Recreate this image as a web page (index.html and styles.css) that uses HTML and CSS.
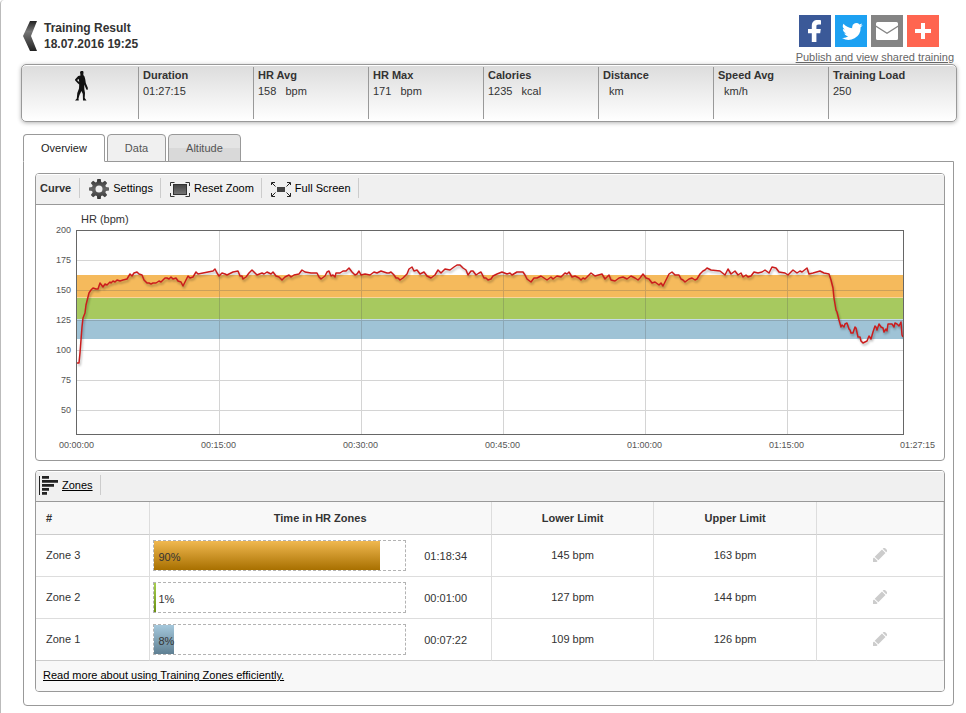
FILE: index.html
```
<!DOCTYPE html>
<html lang="en">

<head>
  <meta charset="UTF-8">
  <meta name="viewport" content="width=device-width, initial-scale=1.0">
  <title>Training Result</title>
  <link rel="stylesheet" href="styles.css">
</head>

<body>
  <!-- Gradients and icons shared by the whole page -->
  <svg class="defs" width="0" height="0" aria-hidden="true">
    <defs>
      <linearGradient id="dark" x1="0" y1="0" x2="0" y2="1">
        <stop offset="0" stop-color="#333" />
        <stop offset=".5" stop-color="#666" />
        <stop offset="1" stop-color="#333" />
      </linearGradient>
      <linearGradient id="screen" x1="0" y1="0" x2="0" y2="1">
        <stop offset="0" stop-color="#444" />
        <stop offset="1" stop-color="#777" />
      </linearGradient>
      <linearGradient id="arrow" x1="0" y1="0" x2="0" y2="1">
        <stop offset="0" stop-color="#222" />
        <stop offset=".35" stop-color="#777" />
        <stop offset="1" stop-color="#222" />
      </linearGradient>
      <symbol id="pencil" viewBox="0 0 14 14">
        <path fill="#ccc" d="M0 14V10.400L1 9.400L4.600 13L3.600 14ZM1.700 8.700L9 1.500L12.500 5L5.300 12.300ZM9.700 .8L10.500 0H12L14 2V3.500L13.200 4.300Z" />
      </symbol>
    </defs>
  </svg>

  <div class="page">
    <header class="header">
      <a class="back" href="#" aria-label="Back">
        <svg width="15" height="31" viewBox="0 0 15 31">
          <path fill="url(#arrow)" d="M7 0H14L8 15L14 30H7L0 15Z" />
        </svg>
      </a>
      <h1 class="title">Training Result<br>18.07.2016 19:25</h1>

      <div class="share">
        <div class="share-icons">
          <a class="share-icon facebook" href="#" aria-label="Facebook">
            <svg width="32" height="32" viewBox="0 0 32 32">
              <path fill="#fff" d="M22 5.200V9.500H19.600C17.700 9.500 17.400 10.400 17.400 11.700V14H21.800L21.200 18.200H17.400V27H12.800V18.200H9V14H12.800V10.800C12.800 7 15.100 5 18.500 5C20.100 5 21.500 5.100 22 5.200Z" />
            </svg>
          </a>
          <a class="share-icon twitter" href="#" aria-label="Twitter">
            <svg width="32" height="32" viewBox="-4 -3 37 37">
              <path fill="#fff" d="M28 8.600a9.900 9.900 0 0 1-2.800.8 4.500 4.500 0 0 0 2.200-2.700c-1 .5-2 1-3.100 1.200a4.900 4.900 0 0 0-8.500 3.300c0 .4 0 .8.1 1.100-4-.2-7.700-2.100-10.100-5.100a5 5 0 0 0 1.500 6.600c-.8 0-1.600-.3-2.200-.6v.1c0 2.400 1.700 4.400 3.900 4.800a4.900 4.900 0 0 1-2.200.1c.6 2 2.400 3.400 4.600 3.400a9.900 9.900 0 0 1-7.300 2A14 14 0 0 0 25.600 11.100c1-.7 1.800-1.600 2.400-2.500Z" />
            </svg>
          </a>
          <a class="share-icon email" href="#" aria-label="Email">
            <svg width="32" height="32" viewBox="0 0 32 32">
              <path fill="#fff" d="M6.500 7H25.500Q27 7 27 8.500V10.500L16 17.500L5 10.500V8.500Q5 7 6.500 7ZM5 12L16 19L27 12V23.500Q27 25 25.500 25H6.500Q5 25 5 23.500Z" />
            </svg>
          </a>
          <a class="share-icon more" href="#" aria-label="More">
            <svg width="32" height="32" viewBox="0 0 32 32">
              <path fill="#fff" d="M14 8H18V14H24V18H18V24H14V18H8V14H14Z" />
            </svg>
          </a>
        </div>
        <a class="share-link" href="#">Publish and view shared training</a>
      </div>
    </header>

    <!-- Summary of the training -->
    <dl class="stats">
      <div class="stat stat-figure">
        <svg width="14" height="30" viewBox="0 0 14 30">
          <path fill="#111" fill-rule="evenodd" d="M5 1L6 0H8L8.500 1L8.300 4L9.500 5.500L10.200 8L10.800 12L12.900 17L12.500 19L11.300 18.500L9.300 13.500V18L10 22L9.700 27L11.500 29.500H8L7.800 23L6.500 20L4.500 24L3.500 27.500L3.800 29.500H0L1.800 27.500L2.300 22L4 17.500L4.200 13.500L2.500 12L.2 9.500L0 8.500L3.200 5L5.500 4.500ZM3.800 8L2 9L4.200 11Z" />
        </svg>
      </div>
      <div class="stat">
        <dt>Duration</dt>
        <dd>01:27:15</dd>
      </div>
      <div class="stat">
        <dt>HR Avg</dt>
        <dd>158 <span class="unit">bpm</span></dd>
      </div>
      <div class="stat">
        <dt>HR Max</dt>
        <dd>171 <span class="unit">bpm</span></dd>
      </div>
      <div class="stat">
        <dt>Calories</dt>
        <dd>1235 <span class="unit">kcal</span></dd>
      </div>
      <div class="stat">
        <dt>Distance</dt>
        <dd><span class="unit">km</span></dd>
      </div>
      <div class="stat">
        <dt>Speed Avg</dt>
        <dd><span class="unit">km/h</span></dd>
      </div>
      <div class="stat">
        <dt>Training Load</dt>
        <dd>250</dd>
      </div>
    </dl>

    <div class="tabs" role="tablist">
      <button class="tab active" type="button" role="tab" aria-selected="true">Overview</button>
      <button class="tab" type="button" role="tab">Data</button>
      <button class="tab shaded" type="button" role="tab">Altitude</button>
    </div>

    <main class="panel">
      <!-- Heart rate curve -->
      <section class="box">
        <div class="toolbar">
          <h2 class="toolbar-title">Curve</h2>
          <button class="tool" type="button">
            <svg width="20" height="20" viewBox="0 0 20 20">
              <path fill="url(#dark)" fill-rule="evenodd" d="M8.300 0H11.700L12.200 3.100L13.400 3.600L16 1.800L18.200 4.100L16.400 6.600L16.900 7.900L20 8.400V11.600L16.900 12.100L16.400 13.400L18.200 15.900L15.900 18.200L13.400 16.400L12.100 16.900L11.700 20H8.300L7.900 16.900L6.600 16.400L4.100 18.200L1.800 15.900L3.600 13.400L3.100 12.100L0 11.600V8.400L3.100 7.900L3.600 6.600L1.800 4.100L4.100 1.800L6.600 3.600L7.800 3.100ZM10 6.500A3.500 3.500 0 1 0 10 13.500A3.500 3.500 0 1 0 10 6.500Z" />
            </svg>
            Settings
          </button>
          <button class="tool" type="button">
            <svg width="20" height="20" viewBox="0 0 20 20">
              <rect x="3.500" y="5.500" width="13" height="10" fill="url(#screen)" stroke="#333" />
              <path fill="none" stroke="#333" d="M4.500 3.500H.5V7M15.500 3.500H19.500V7M.5 14V17.500H4.500M19.500 14V17.500H15.500" />
            </svg>
            Reset Zoom
          </button>
          <button class="tool" type="button">
            <svg width="20" height="20" viewBox="0 0 20 20">
              <rect x="6" y="8" width="8" height="5" fill="#444" />
              <path fill="none" stroke="#222" d="M.5 6V3.500H4M1 4L4.500 7.500M16 3.500H19.500V6M19 4L15.500 7.500M.5 14V17.500H4M1 17L4.500 13.500M16 17.500H19.500V14M19 17L15.500 13.500" />
            </svg>
            Full Screen
          </button>
        </div>

        <div class="chart">
          <div class="chart-title">HR (bpm)</div>
          <div class="y-axis">
            <span>200</span>
            <span>175</span>
            <span>150</span>
            <span>125</span>
            <span>100</span>
            <span>75</span>
            <span>50</span>
          </div>
          <svg class="plot" viewBox="0 0 826 203" preserveAspectRatio="none" role="img" aria-label="Heart rate curve">
            <!-- Zone bands -->
            <g shape-rendering="crispEdges">
              <rect x="0" y="44" width="826" height="23" fill="#f5ba5c" />
              <rect x="0" y="67" width="826" height="21" fill="#a7c95f" />
              <rect x="0" y="88" width="826" height="20" fill="#9fc3d6" />
              <path class="zone-line" d="M0 66.500H826M0 88.500H826" />
            </g>
            <path class="grid" d="M0 29.500H826M0 59.500H826M0 89.500H826M0 119.500H826M0 149.500H826M0 179.500H826M142.500 0V203M284.500 0V203M426.500 0V203M568.500 0V203M710.500 0V203" />
            <polyline class="curve" points="0,132 2,132 3,122 4,109 5,96 6,87 8,82 9,74 11,66 12,62 14,59 16,57 19,58 21,58 23,52 26,56 28,53 30,54 33,51 34,52 36,50 38,51 40,49 43,50 46,49 50,48 53,43 55,45 57,42 60,41 62,43 65,44 67,49 70,52 72,52 74,53 76,52 79,52 82,50 84,51 86,49 88,47 90,47 92,48 94,46 96,48 99,47 101,50 104,51 106,55 108,51 111,45 113,47 116,46 119,41 121,43 126,42 131,41 136,40 138,38 140,42 142,45 145,42 148,43 150,44 152,43 156,41 161,40 163,45 165,45 166,48 169,46 172,42 175,39 178,42 180,44 185,42 187,43 190,41 194,43 196,41 199,45 202,46 205,49 208,46 212,44 214,46 217,44 222,43 225,39 228,41 234,42 240,42 242,46 244,48 248,45 250,41 252,40 254,45 256,44 258,46 259,42 263,42 266,40 269,40 272,37 275,41 278,44 280,43 282,40 284,44 288,43 293,44 297,41 300,42 304,40 310,42 312,42 314,41 317,44 319,47 321,47 323,49 326,47 330,43 332,38 335,36 337,40 340,39 343,43 347,41 350,45 354,47 358,44 361,39 364,42 368,38 373,39 377,36 380,34 383,34 386,37 389,39 391,44 394,40 396,40 399,44 402,42 404,41 407,47 409,47 411,49 414,48 416,45 420,43 425,41 430,43 433,42 435,44 440,41 446,41 448,44 450,48 454,51 457,47 460,47 464,45 467,47 470,49 474,46 476,48 480,45 484,46 488,42 490,43 492,41 495,46 498,45 502,47 504,49 506,47 508,48 511,45 514,42 518,45 525,43 528,48 532,44 534,49 538,50 542,47 546,46 550,48 554,45 558,47 561,49 563,47 566,43 569,47 572,48 575,52 578,51 582,54 584,52 586,55 589,49 592,43 595,41 598,44 602,44 604,48 606,49 608,51 612,48 615,47 618,49 620,48 623,43 626,40 628,39 630,37 634,39 643,40 648,44 651,38 654,43 658,40 661,44 664,42 666,46 669,44 671,46 674,45 677,41 681,42 685,41 688,39 692,42 695,36 699,37 702,41 708,42 711,44 716,39 720,42 723,40 725,41 730,37 732,43 736,42 743,40 747,42 752,43 754,49 756,57 757,67 759,79 760,81 762,89 764,96 765,94 767,96 768,93 770,92 772,98 773,99 774,102 776,102 778,96 779,97 781,106 783,106 784,110 786,112 788,111 790,110 792,105 794,108 796,101 798,95 799,96 800,99 802,93 804,96 806,97 807,101 809,98 810,100 811,93 813,93 815,93 817,96 818,92 820,93 822,95 824,91 825,104 826,106" />
          </svg>
          <div class="x-axis">
            <span>00:00:00</span>
            <span>00:15:00</span>
            <span>00:30:00</span>
            <span>00:45:00</span>
            <span>01:00:00</span>
            <span>01:15:00</span>
            <span>01:27:15</span>
          </div>
        </div>
      </section>

      <!-- Heart rate zones -->
      <section class="box">
        <div class="toolbar zones-toolbar">
          <a class="tool zones-link" href="#">
            <svg width="20" height="20" viewBox="0 0 20 20">
              <path fill="#222" d="M0 0H1V19H0ZM3 0H10V3H3ZM3 4H19V7H3ZM3 8H15V11H3ZM3 12H10V15H3ZM3 16H8V19H3Z" />
              <path fill="#555" d="M3 2H10V3H3ZM3 6H19V7H3ZM3 10H15V11H3ZM3 14H10V15H3ZM3 18H8V19H3Z" />
            </svg>
            <span>Zones</span>
          </a>
        </div>

        <table class="zones">
          <colgroup>
            <col class="col-name">
            <col class="col-time">
            <col class="col-limit">
            <col class="col-limit">
            <col class="col-edit">
          </colgroup>
          <thead>
            <tr>
              <th class="name">#</th>
              <th>Time in HR Zones</th>
              <th>Lower Limit</th>
              <th>Upper Limit</th>
              <th></th>
            </tr>
          </thead>
          <tbody>
            <tr>
              <td class="name">Zone 3</td>
              <td class="time">
                <div class="time-row">
                  <div class="bar">
                    <div class="fill orange" style="width: 90%"></div>
                    <span class="percent">90%</span>
                  </div>
                  <span class="duration">01:18:34</span>
                </div>
              </td>
              <td>145 bpm</td>
              <td>163 bpm</td>
              <td><button class="edit" type="button" aria-label="Edit Zone 3"><svg width="14" height="14"><use href="#pencil" /></svg></button></td>
            </tr>
            <tr>
              <td class="name">Zone 2</td>
              <td class="time">
                <div class="time-row">
                  <div class="bar">
                    <div class="fill green" style="width: 1%"></div>
                    <span class="percent">1%</span>
                  </div>
                  <span class="duration">00:01:00</span>
                </div>
              </td>
              <td>127 bpm</td>
              <td>144 bpm</td>
              <td><button class="edit" type="button" aria-label="Edit Zone 2"><svg width="14" height="14"><use href="#pencil" /></svg></button></td>
            </tr>
            <tr>
              <td class="name">Zone 1</td>
              <td class="time">
                <div class="time-row">
                  <div class="bar">
                    <div class="fill blue" style="width: 8%"></div>
                    <span class="percent">8%</span>
                  </div>
                  <span class="duration">00:07:22</span>
                </div>
              </td>
              <td>109 bpm</td>
              <td>126 bpm</td>
              <td><button class="edit" type="button" aria-label="Edit Zone 1"><svg width="14" height="14"><use href="#pencil" /></svg></button></td>
            </tr>
          </tbody>
        </table>

        <div class="box-footer">
          <a href="#">Read more about using Training Zones efficiently.</a>
        </div>
      </section>
    </main>
  </div>
</body>

</html>
```
FILE: styles.css
```
* {
  box-sizing: border-box;
}

body {
  margin: 0;
  background-color: #fff;
  color: #333;
  font-family: "Liberation Sans", Arial, sans-serif;
  font-size: 11px;
  line-height: 16px;
}

svg {
  display: block;
  flex: none;
}

button {
  font: inherit;
  color: inherit;
  cursor: pointer;
}

.defs {
  position: absolute;
}

.page {
  min-height: 100vh;
  padding-bottom: 7px;
  border-left: 1px solid #bbb;
  border-top-left-radius: 4px;
}

/* Header */

.header {
  display: flex;
  align-items: flex-start;
  padding: 15px 12px 0 22px;
}

.back {
  margin-top: 6px;
}

.title {
  margin: 5px auto 0 6px;
  font-size: 12px;
  line-height: 16px;
}

.share-icons {
  display: flex;
  gap: 4px;
  margin-left: 3px;
}

.share-icon {
  width: 32px;
  height: 32px;
}

.facebook {
  background-color: #3b5998;
}

.twitter {
  background-color: #1da1f2;
}

.email {
  background-color: #848484;
}

.more {
  background-color: #ff6550;
}

.share-link {
  display: block;
  margin-top: 4px;
  line-height: 13px;
  color: #666;
}

/* Summary bar */

.stats {
  display: grid;
  grid-template-columns: 116fr repeat(6, 115fr) 128fr;
  margin: 0 9px 0 20px;
  padding: 2px 0;
  border: 1px solid #999;
  border-radius: 5px;
  background: linear-gradient(#dcdcdc, #fff);
  box-shadow: inset 0 1px #fff, 0 1px 4px rgba(0, 0, 0, 0.3);
}

.stat {
  height: 52px;
  padding-left: 4px;
  border-left: 1px solid #999;
}

.stat-figure {
  display: flex;
  justify-content: center;
  padding: 4px 0 0 4px;
  border-left: none;
}

.stat dt {
  font-weight: bold;
}

.stat dd {
  margin: 0;
}

.unit {
  margin-left: 6px;
}

/* Tabs */

.tabs {
  display: flex;
  gap: 2px;
  position: relative;
  margin: 12px 12px -1px 22px;
}

.tab {
  height: 28px;
  padding: 0 17px;
  border: 1px solid #999;
  border-radius: 4px 4px 0 0;
  background-color: #f0f0f0;
  color: #555;
}

.tab.shaded {
  background: linear-gradient(#e4e4e4 50%, #d9d9d9 50%);
}

.tab.active {
  border-bottom-color: #fff;
  background-color: #fff;
  color: #222;
}

.panel {
  display: flex;
  flex-direction: column;
  gap: 9px;
  margin: 0 12px 0 22px;
  padding: 11px 8px 13px 11px;
  border: 1px solid #999;
  border-radius: 0 0 4px 4px;
}

.box {
  border: 1px solid #999;
  border-radius: 4px;
  overflow: hidden;
}

.toolbar {
  display: flex;
  align-items: center;
  height: 31px;
  padding: 0 0 2px 4px;
  border-bottom: 1px solid #999;
  background-color: #f0f0f0;
  box-shadow: inset 0 1px #fff;
}

.toolbar-title {
  margin: 0;
  padding-right: 8px;
  font-size: 11px;
  line-height: 20px;
  border-right: 1px solid #ccc;
}

.tool {
  display: flex;
  align-items: center;
  gap: 4px;
  height: 20px;
  padding: 0 7px 0 9px;
  border: none;
  border-right: 1px solid #ccc;
  background: none;
  color: #000;
}

.tool svg {
  margin-top: 2px;
}

/* Curve */

.chart {
  display: grid;
  grid-template-columns: 40px 1fr;
  padding: 6px 40px 8px 0;
}

.chart-title {
  grid-column: 2;
  height: 19px;
  padding-left: 5px;
}

.y-axis {
  display: flex;
  flex-direction: column;
  height: 205px;
  margin-top: -15px;
  padding-right: 5px;
  font-size: 9px;
  line-height: 30px;
  text-align: right;
  color: #555;
}

.plot {
  width: 100%;
  height: 205px;
  border: 1px solid #666;
}

.zone-line {
  fill: none;
  stroke: rgba(255, 255, 255, 0.4);
}

.grid {
  fill: none;
  stroke: rgba(84, 84, 84, 0.25);
  shape-rendering: crispEdges;
}

.curve {
  fill: none;
  stroke: #cb1c1c;
  stroke-width: 1.5;
  stroke-linejoin: round;
  filter: drop-shadow(1px 2px 1px rgba(0, 0, 0, 0.3));
}

.x-axis {
  grid-column: 1 / -1;
  display: grid;
  grid-template-columns: repeat(5, 142fr) 131fr 36px;
  margin: 3px -32px 0 23px;
  font-size: 9px;
  line-height: 14px;
  color: #555;
}

/* Zones */

.zones-toolbar {
  padding-left: 3px;
}

.zones-link {
  gap: 3px;
  padding-left: 0;
  text-decoration: none;
}

.zones-link span {
  text-decoration: underline;
}

.zones {
  width: 100%;
  table-layout: fixed;
  border-collapse: separate;
  border-spacing: 0;
  text-align: center;
}

.col-name {
  width: 12.5%;
}

.col-time {
  width: 37.7%;
}

.col-limit {
  width: 17.9%;
}

.zones th,
.zones td {
  height: 42px;
  padding: 0 0 2px;
  border-right: 1px solid #ddd;
  border-bottom: 1px solid #ddd;
}

.zones th {
  height: 33px;
  padding: 0;
  border-bottom-color: #ccc;
  background-color: #f8f8f8;
}

.zones tr:last-child td {
  border-bottom-color: #ccc;
}

.zones .name {
  padding-left: 10px;
  text-align: left;
}

.zones .time {
  padding: 0;
}

.time-row {
  display: flex;
  align-items: center;
  padding-left: 3px;
}

.bar {
  position: relative;
  width: 75%;
  height: 31px;
  border: 1px dashed #b3b3b3;
  text-align: left;
}

.fill {
  height: 100%;
}

.orange {
  background: linear-gradient(#f0b850, #a87000);
}

.green {
  background: linear-gradient(#a7cf50, #6a9010);
}

.blue {
  background: linear-gradient(#a5c8dc, #5f8093);
}

/* The value is written over the coloured part of the bar */
.percent {
  position: absolute;
  top: 8px;
  left: 5px;
}

.duration {
  margin-left: 18px;
}

.edit {
  display: block;
  margin: 0 auto;
  padding: 0;
  border: none;
  background: none;
}

.box-footer {
  padding: 6px 7px 8px;
  background-color: #f8f8f8;
}

.box-footer a {
  color: #000;
}
```
